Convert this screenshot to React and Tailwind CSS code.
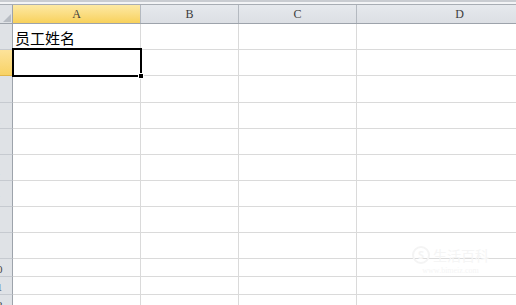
import React from "react";

const COLS = [
  { key: "A", w: "w-[128px]", active: true },
  { key: "B", w: "w-[98px]" },
  { key: "C", w: "w-[118px]" },
  { key: "D", w: "w-[206px]" },
];

const ROWS = [
  { n: 1, h: "h-[26px]", text: "员工姓名" },
  { n: 2, h: "h-[26px]", active: true },
  { n: 3, h: "h-[27px]" },
  { n: 4, h: "h-[26px]" },
  { n: 5, h: "h-[26px]" },
  { n: 6, h: "h-[26px]" },
  { n: 7, h: "h-[26px]" },
  { n: 8, h: "h-[26px]" },
  { n: 9, h: "h-[26px]" },
  { n: 10, h: "h-[18px]" },
  { n: 11, h: "h-[18px]" },
  { n: 12, h: "h-[18px]" },
];

const serif = { fontFamily: '"Liberation Serif", "DejaVu Serif", serif' };

function HeaderRow() {
  return (
    <div className="flex h-[19px] border-b border-[#9da3ab]">
      <div className="relative w-[13px] shrink-0 bg-[#dfe2e6] border-r border-[#9da3ab]">
        <svg className="absolute right-[1px] bottom-[1px]" width="8" height="8" viewBox="0 0 8 8">
          <polygon points="8,0 8,8 0,8" fill="#b7bcc3" />
        </svg>
      </div>
      {COLS.map((c) => (
        <div
          key={c.key}
          className={`${c.w} shrink-0 flex items-center justify-center border-r border-[#b4b9c0] text-[12px] text-[#3c3c3c] ${
            c.active
              ? "bg-gradient-to-b from-[#fde9a3] to-[#f8d15a]"
              : "bg-gradient-to-b from-[#e6e9ed] to-[#dcdfe4]"
          }`}
          style={serif}
        >
          {c.key}
        </div>
      ))}
    </div>
  );
}

function Row({ row }) {
  return (
    <div className={`flex ${row.h} shrink-0`}>
      <div
        className={`w-[13px] shrink-0 overflow-hidden border-r border-[#9da3ab] border-b ${
          row.active
            ? "bg-gradient-to-b from-[#fde39a] to-[#f8d264] border-b-[#e2b64a]"
            : "bg-[#dfe2e6] border-b-[#c6cad0]"
        }`}
      >
        <div
          className="ml-[-16px] w-[26px] h-full flex items-end justify-center pb-[1px] text-[11px] leading-none text-[#444]"
          style={serif}
        >
          {row.n}
        </div>
      </div>
      {COLS.map((c, i) => (
        <div
          key={c.key}
          className={`${c.w} shrink-0 border-r border-b border-[#dadada] bg-white flex items-end`}
        >
          {i === 0 && row.text ? (
            <span
              className="pl-[2px] pb-[4px] text-[15px] leading-none text-black"
              style={{ fontFamily: '"Noto Sans CJK SC", "Noto Sans", sans-serif' }}
            >
              {row.text}
            </span>
          ) : null}
        </div>
      ))}
    </div>
  );
}

export default function App() {
  return (
    <div className="relative w-[516px] h-[305px] overflow-hidden bg-white">
      <div className="h-[2px] bg-[#c9ccd1]" />
      <div className="h-[3px] bg-[#f3f4f6] border-b border-[#a8adb4]" />
      <HeaderRow />
      {ROWS.map((r) => (
        <Row key={r.n} row={r} />
      ))}

      {/* active cell A2 */}
      <div className="absolute left-[12px] top-[48px] w-[130px] h-[29px] border-[2px] border-black pointer-events-none" />
      <div className="absolute left-[138px] top-[73px] w-[6px] h-[6px] bg-black border border-white pointer-events-none" />

      {/* faint watermark */}
      <div className="absolute left-[412px] top-[246px] flex flex-col items-center pointer-events-none">
        <div className="flex items-center gap-[3px]">
          <div className="w-[18px] h-[18px] rounded-full border-2 border-[#f4f4f4] flex items-center justify-center text-[11px] font-bold text-[#f4f4f4]">
            S
          </div>
          <span
            className="text-[14px] leading-none text-[#f5f5f5]"
            style={{ fontFamily: '"Noto Sans CJK SC", sans-serif' }}
          >
            生活百科
          </span>
        </div>
        <span className="mt-[3px] text-[8px] leading-none text-[#f5f5f5]" style={serif}>
          www.bimeiz.com
        </span>
      </div>
    </div>
  );
}
